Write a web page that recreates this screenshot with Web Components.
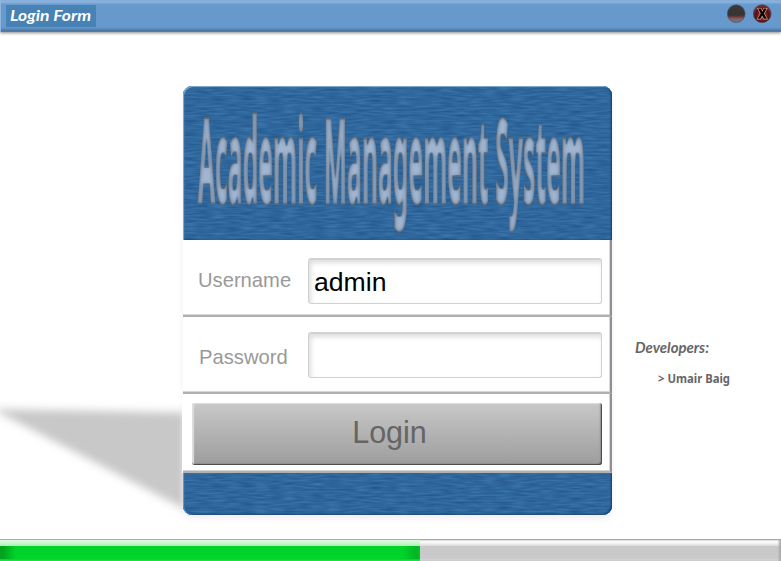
<!DOCTYPE html>
<html lang="en"><head><meta charset="utf-8"><title>Login Form</title>
<style>html,body{margin:0;width:781px;height:561px;overflow:hidden;background:#fff}</style></head><body>
<login-window></login-window>
<script>
const define=(name,html)=>customElements.define(name,class extends HTMLElement{
  constructor(){super();this.attachShadow({mode:'open'}).innerHTML=html}
});
define('title-bar',`<style>
:host{display:flex;box-sizing:border-box;height:32px;padding:5px 9px 0 6px;justify-content:space-between;align-items:flex-start;
background:linear-gradient(#82abd8 0,#8fb4dd 2px,#6a9cd0 4px,#6699cc 6px,#6699cc 27px,#5c8abb 29px,#44709d 31px,#6487aa 32px);box-shadow:0 1px 3px #888,inset 1px 0 #8fb4dd}
.name{display:block;background:#4682b4;width:90px;height:22px}
.buttons{display:flex;gap:7px;margin-top:-1px}
svg{display:block}
</style><svg class="name" viewBox="0 0 90 22"><text x="4" y="16" textLength="81" lengthAdjust="spacingAndGlyphs" font-family="Lato, sans-serif" font-weight="700" font-style="italic" font-size="15.5" fill="#fff">Login Form</text></svg>
<div class="buttons">
<svg width="19" height="19" viewBox="0 0 19 19"><defs><linearGradient id="m" x2="0" y2="1"><stop offset="0" stop-color="#3b3b3b"/><stop offset=".58" stop-color="#363333"/><stop offset=".68" stop-color="#77393c"/><stop offset=".78" stop-color="#7a6368"/><stop offset="1" stop-color="#77777d"/></linearGradient></defs><circle cx="9.2" cy="9.7" r="8.9" fill="url(#m)" stroke="#4a4d57" stroke-width=".6"/></svg>
<svg width="19" height="19" viewBox="0 0 19 19"><defs><radialGradient id="c" cy=".6"><stop offset="0" stop-color="#d05c4c"/><stop offset=".4" stop-color="#8a2626"/><stop offset=".75" stop-color="#4b1218"/><stop offset="1" stop-color="#722c33"/></radialGradient></defs><circle cx="9.2" cy="9.7" r="8.9" fill="url(#c)" stroke="#59313f" stroke-width=".6"/><path d="M5 4.6h3l1.4 3.1 1.5-3.1h2.8l-2.8 5 3 5.2h-3l-1.6-3.3-1.8 3.3H4.6l3.1-5.2z" fill="#090706" stroke="#e8a880" stroke-width="1.2" paint-order="stroke"/></svg>
</div>`);

define('wave-panel',`<style>
:host{display:block;position:relative;background:#2e669c}
.waves{position:absolute;inset:0;width:100%;height:100%;border-radius:inherit}
.shade{position:absolute;inset:0;border-radius:inherit;box-shadow:var(--edge)}
</style><svg class="waves"><filter id="w" x="0" y="0" width="100%" height="100%" color-interpolation-filters="sRGB"><feTurbulence type="fractalNoise" baseFrequency=".07 .55" numOctaves="1" seed="8"/><feColorMatrix values=".15 0 0 0 .11  .19 0 0 0 .31  .19 0 0 0 .52  0 0 0 0 1"/></filter><rect width="100%" height="100%" filter="url(#w)"/></svg><div class="shade"></div><slot></slot>`);

// Tall, narrow lettering with a light bevelled core.
define('product-title',`<style>:host{display:block;position:relative;height:154px}svg{display:block;width:429px;height:154px;overflow:visible}</style>
<svg viewBox="0 0 429 154"><defs><filter id="b" x="-5%" y="-5%" width="110%" height="110%" color-interpolation-filters="sRGB"><feGaussianBlur in="SourceAlpha" stdDeviation="2.2" result="a"/><feComponentTransfer in="a" result="core"><feFuncA type="linear" slope="2.2" intercept="-1.25"/></feComponentTransfer><feFlood flood-color="#a3b8d4"/><feComposite in2="core" operator="in" result="light"/><feMorphology in="SourceAlpha" operator="erode" radius="1" result="inner"/><feComposite in="light" in2="inner" operator="in" result="light2"/><feMerge><feMergeNode in="SourceGraphic"/><feMergeNode in="light2"/></feMerge></filter></defs>
<g filter="url(#b)"><text transform="translate(15 116.5) scale(1 4.46)" textLength="387" lengthAdjust="spacingAndGlyphs" font-family="Noto Sans, sans-serif" font-weight="700" font-size="26" fill="#7b8ea7" stroke="#6a6c70" stroke-width="2" vector-effect="non-scaling-stroke" paint-order="stroke">Academic Management System</text></g></svg>`);

define('form-row',`<style>
:host{display:flex;box-sizing:border-box;height:77px;padding:18px 8px 0 0;background:#fff;border:solid #b0b0b0;border-width:0 2px 2px 0;border-right-color:#8e9096;box-shadow:inset -1px -1px #d6d6d6}
label{flex:none;width:125px;box-sizing:border-box;padding-left:var(--label-x,15px);font:20.2px/44px "Liberation Sans",sans-serif;color:#999}
::slotted(input){flex:none;box-sizing:border-box;width:294px;height:46px;margin:0;padding:2px 5px 0;border:1px solid #d1d1d1;border-top:2px solid #d2d2d2;border-radius:3px;background:#fff;box-shadow:inset 2px 3px 5px #ddd;font:26.6px "Liberation Sans",sans-serif;color:#000;outline:0}
</style><label><slot name="label"></slot></label><slot></slot>`);

define('login-button',`<style>
:host{display:block;box-sizing:border-box;height:79px;padding:9px 8px 9px 9px;background:#fff;border:solid #b0b0b0;border-width:0 2px 2px 0;border-right-color:#8e9096;box-shadow:inset -1px -1px #d6d6d6,-1px 0 #fff}
button{display:block;width:410px;height:62px;padding:0 15px 4px 0;border:0;border-radius:3px;background:linear-gradient(#c8c8c8,#9d9d9d);box-shadow:inset -1px -1px 1px #444,inset 2px 1px 1px #ddd,inset -2px -2px 2px #999;font:30.5px "Liberation Sans",sans-serif;color:#656565}
</style><button><slot></slot></button>`);

define('developer-list',`<style>
:host{display:block;padding:303px 0 0 20px;color:#666}
svg{display:block}
.person{margin:7px 0 0 26px;font:700 11.5px "Noto Sans",sans-serif}
</style><svg width="84" height="28"><text x="3" y="18" textLength="74" lengthAdjust="spacingAndGlyphs" font-family="Lato,sans-serif" font-style="italic" font-weight="700" font-size="16" fill="#666">Developers:</text></svg>
<svg class="person" width="90" height="18"><text x="0" y="13" textLength="72" lengthAdjust="spacingAndGlyphs" fill="#666">&gt; Umair Baig</text></svg>`);

define('load-bar',`<style>
:host{display:grid;grid-template-columns:420px 1fr;box-sizing:border-box;height:22px;border-top:1px solid #aaa}
.done{display:flow-root;background:linear-gradient(#e0fae3 0,#c8f8cc 3px,#b0ebb5 6px,#00d42a 6px,#00d42a 19px,#28df4d 21px)}
.done:before{content:"";display:block;height:13px;margin-top:6px;background:linear-gradient(90deg,#00a51d 3px,transparent 16px,transparent 402px,#00b522 417px,#00c528)}
.rest{background:linear-gradient(#eee 0,#fff 2px,#e9e9e9 4px,#ddd 6px,#c9c9c9 6px,#c9c9c9 18px,#ddd 21px);box-shadow:inset -2px 0 2px #aaa}
</style><div class="done"></div><div class="rest"></div>`);

define('login-window',`<style>
:host{display:grid;grid-template-rows:32px 507px 22px;width:781px;height:561px;background:#fff}
main{display:grid;grid-template-columns:183px 429px 1fr}
.cast{width:183px;height:507px}
.card{margin-top:54px;height:429px;position:relative;border-radius:9px;box-shadow:0 4px 6px #f0f0f0}
.top{height:154px;border-radius:9px 9px 0 0;--edge:inset 1px 1px 1px #86b2cf,inset -1px 0 2px #123d69}
.bottom{height:42px;border-radius:0 0 9px 9px;--edge:inset 1px 0 1px #6d9dc5,inset -1px -1px 2px #163f6d}
.second{height:77px;padding-top:15px;--label-x:16px}
.second span{position:relative;top:3px}
</style><title-bar></title-bar><main>
<svg class="cast"><defs><filter id="s" x="-10%" y="-20%" width="120%" height="140%"><feGaussianBlur stdDeviation="4.5"/></filter></defs><path d="M-8 377L210 381V490Z" fill="#c8c8c8" filter="url(#s)"/></svg>
<section class="card"><wave-panel class="top"><product-title></product-title></wave-panel>
<form-row><span slot="label">Username</span><input value="admin" aria-label="Username"></form-row>
<form-row class="second"><span slot="label">Password</span><input type="password" aria-label="Password"></form-row>
<login-button>Login</login-button><wave-panel class="bottom"></wave-panel></section>
<developer-list></developer-list></main><load-bar></load-bar>`);
</script></body></html>
